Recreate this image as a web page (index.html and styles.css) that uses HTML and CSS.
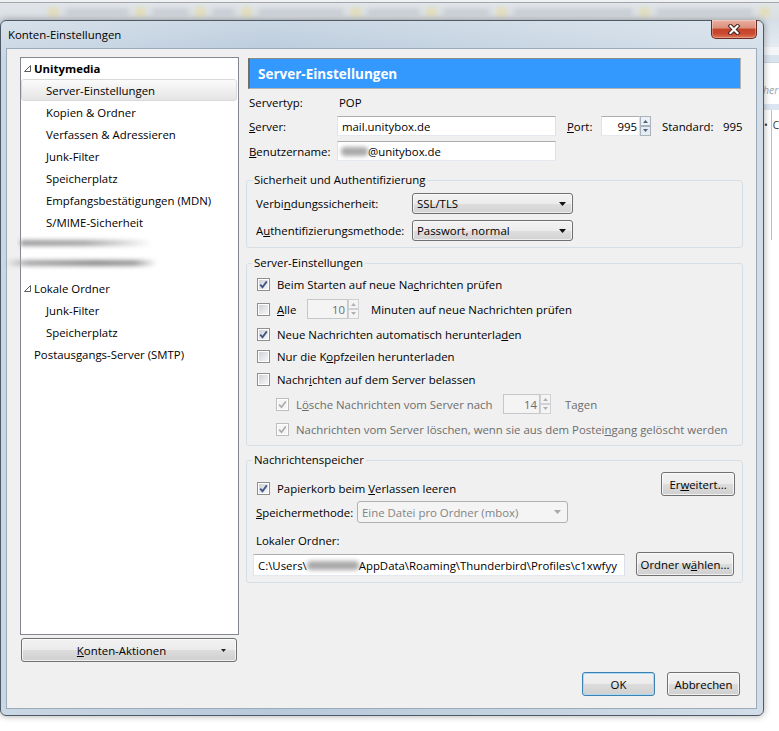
FILE: index.html
```html
<!DOCTYPE html>
<html lang="de">
<head>
<meta charset="utf-8">
<title>Konten-Einstellungen</title>
<link rel="stylesheet" href="styles.css">
</head>
<body>
<div class="desktop">
  <div class="bg-toolbar">
    <span class="ic"></span><span class="tx w64"></span>
    <span class="ic"></span><span class="tx w37"></span>
    <span class="ic"></span><span class="tx w23"></span>
    <span class="ic"></span><span class="tx w86"></span>
    <span class="ic"></span><span class="tx w53"></span>
    <span class="ic"></span><span class="tx w47"></span>
    <span class="ic"></span><span class="tx w120"></span>
    <span class="ic"></span><span class="tx w97"></span>
    <span class="ic"></span>
  </div>
  <div class="bg-app">
    <div class="app-top"></div>
    <div class="app-band"></div>
    <div class="app-line"></div>
    <div class="app-search">her</div>
    <div class="app-band2"></div>
    <div class="app-list">
      <div class="app-row"><span class="app-dot">&#8226;</span><span class="app-col">C</span></div>
    </div>
  </div>

  <div class="window">
    <div class="titlebar">
      <span class="title">Konten-Einstellungen</span>
      <div class="close">
        <svg width="14" height="11" viewBox="0 0 14 11"><path d="M3.5 2 L10.5 9 M10.5 2 L3.5 9" stroke="#3a1d16" stroke-width="4" stroke-linecap="square" fill="none"/><path d="M3.5 2 L10.5 9 M10.5 2 L3.5 9" stroke="#ffffff" stroke-width="2.2" stroke-linecap="square" fill="none"/></svg>
      </div>
    </div>

    <div class="client">
      <div class="main">
        <div class="left">
          <div class="tree">
            <div class="node top first"><svg class="twisty" viewBox="0 0 7 7"><polygon points="6.5,0.5 6.5,6.5 0.5,6.5" fill="#ffffff" stroke="#5c5c5c" stroke-width="1"/></svg><b>Unitymedia</b></div>
            <div class="node child selected">Server-Einstellungen</div>
            <div class="node child">Kopien &amp; Ordner</div>
            <div class="node child">Verfassen &amp; Adressieren</div>
            <div class="node child">Junk-Filter</div>
            <div class="node child">Speicherplatz</div>
            <div class="node child">Empfangsbestätigungen (MDN)</div>
            <div class="node child">S/MIME-Sicherheit</div>
            <div class="node redacted"><span class="smudge sm-a"></span></div>
            <div class="node redacted"><span class="smudge sm-b"></span></div>
            <div class="node top"><svg class="twisty" viewBox="0 0 7 7"><polygon points="6.5,0.5 6.5,6.5 0.5,6.5" fill="#ffffff" stroke="#5c5c5c" stroke-width="1"/></svg>Lokale Ordner</div>
            <div class="node child">Junk-Filter</div>
            <div class="node child">Speicherplatz</div>
            <div class="node root">Postausgangs-Server (SMTP)</div>
          </div>
          <button class="btn actions"><span class="btn-label"><u>K</u>onten-Aktionen</span><svg class="mini-arrow" viewBox="0 0 5 3"><polygon points="0,0 5,0 2.5,3" fill="#222"/></svg></button>
        </div>

        <div class="right">
          <div class="page-head">Server-Einstellungen</div>

          <div class="frow r-type">
            <span class="lab-main">Servertyp:</span>
            <span class="val-pop">POP</span>
          </div>
          <div class="frow r-server">
            <span class="lab-main"><u>S</u>erver:</span>
            <div class="tb w219">mail.unitybox.de</div>
            <span class="lab-port"><u>P</u>ort:</span>
            <div class="spinbox">
              <div class="tb port-tb">995</div>
              <svg class="spin" viewBox="0 0 11 20"><rect x="0.5" y="0.5" width="10" height="9" fill="#eef0f3" stroke="#a9b3be"/><rect x="0.5" y="10.5" width="10" height="9" fill="#e7eaee" stroke="#a9b3be"/><polygon points="3,7 5.5,4 8,7" fill="#4d6185"/><polygon points="3,13 5.5,16 8,13" fill="#4d6185"/></svg>
            </div>
            <span class="lab-std">Standard:</span>
            <span>995</span>
          </div>
          <div class="frow r-user">
            <span class="lab-main"><u>B</u>enutzername:</span>
            <div class="tb w219"><span class="smudge sm-user"></span>@unitybox.de</div>
          </div>

          <fieldset class="group g1">
            <legend>Sicherheit und Authentifizierung</legend>
            <div class="gbody">
              <div class="srow">
                <span class="lab-sec">Verbi<u>n</u>dungssicherheit:</span>
                <div class="combo"><span>SSL/TLS</span><svg class="arr" viewBox="0 0 7 4"><polygon points="0,0 7,0 3.5,4" fill="#111"/></svg></div>
              </div>
              <div class="srow">
                <span class="lab-sec">A<u>u</u>thentifizierungsmethode:</span>
                <div class="combo"><span>Passwort, normal</span><svg class="arr" viewBox="0 0 7 4"><polygon points="0,0 7,0 3.5,4" fill="#111"/></svg></div>
              </div>
            </div>
          </fieldset>

          <fieldset class="group g2">
            <legend>Server-Einstellungen</legend>
            <div class="gbody">
              <div class="crow h22">
                <span class="cb"><svg viewBox="0 0 11 11"><path d="M2.2 5.6 L4.5 8.2 L8.8 2.4" stroke="#3f5688" stroke-width="1.8" fill="none"/></svg></span>
                <span>Beim Starten auf neue Na<u>c</u>hrichten prüfen</span>
              </div>
              <div class="crow h28">
                <span class="cb"></span>
                <span class="lab-alle"><u>A</u>lle</span>
                <div class="spinbox">
                  <div class="tb dis alle-tb">10</div>
                  <svg class="spin" viewBox="0 0 11 20"><rect x="0.5" y="0.5" width="10" height="9" fill="#f4f4f4" stroke="#cfd1d4"/><rect x="0.5" y="10.5" width="10" height="9" fill="#f4f4f4" stroke="#cfd1d4"/><polygon points="3,7 5.5,4 8,7" fill="#b0b0b0"/><polygon points="3,13 5.5,16 8,13" fill="#b0b0b0"/></svg>
                </div>
                <span class="gap12">Minuten auf neue Nachrichten prüfen</span>
              </div>
              <div class="crow h22">
                <span class="cb"><svg viewBox="0 0 11 11"><path d="M2.2 5.6 L4.5 8.2 L8.8 2.4" stroke="#3f5688" stroke-width="1.8" fill="none"/></svg></span>
                <span>Neue Nachrichten automatisch herunterla<u>d</u>en</span>
              </div>
              <div class="crow h22">
                <span class="cb"></span>
                <span>Nur die K<u>o</u>pfzeilen herunterladen</span>
              </div>
              <div class="crow h24">
                <span class="cb"></span>
                <span>Nachr<u>i</u>chten auf dem Server belassen</span>
              </div>
              <div class="crow h26 ind dis-text">
                <span class="cb dis"><svg viewBox="0 0 11 11"><path d="M2.2 5.6 L4.5 8.2 L8.8 2.4" stroke="#a9a9a9" stroke-width="1.6" fill="none"/></svg></span>
                <span class="lab-loesche">L<u>ö</u>sche Nachrichten vom Server nach</span>
                <div class="spinbox">
                  <div class="tb dis loe-tb">14</div>
                  <svg class="spin" viewBox="0 0 11 20"><rect x="0.5" y="0.5" width="10" height="9" fill="#f4f4f4" stroke="#cfd1d4"/><rect x="0.5" y="10.5" width="10" height="9" fill="#f4f4f4" stroke="#cfd1d4"/><polygon points="3,7 5.5,4 8,7" fill="#b0b0b0"/><polygon points="3,13 5.5,16 8,13" fill="#b0b0b0"/></svg>
                </div>
                <span class="gap14">Tagen</span>
              </div>
              <div class="crow h24 ind dis-text">
                <span class="cb dis"><svg viewBox="0 0 11 11"><path d="M2.2 5.6 L4.5 8.2 L8.8 2.4" stroke="#a9a9a9" stroke-width="1.6" fill="none"/></svg></span>
                <span>Nachrichten vom Server löschen, wenn sie aus dem Postei<u>n</u>gang gelöscht werden</span>
              </div>
            </div>
          </fieldset>

          <fieldset class="group g3">
            <legend>Nachrichtenspeicher</legend>
            <div class="gbody">
              <div class="n-row1">
                <div class="cbl">
                  <span class="cb"><svg viewBox="0 0 11 11"><path d="M2.2 5.6 L4.5 8.2 L8.8 2.4" stroke="#3f5688" stroke-width="1.8" fill="none"/></svg></span>
                  <span>Papierkorb beim <u>V</u>erlassen leeren</span>
                </div>
                <button class="btn w74">Er<u>w</u>eitert...</button>
              </div>
              <div class="n-row2">
                <span class="lab-sm"><u>S</u>peichermethode:</span>
                <div class="combo dis"><span>Eine Datei pro Ordner (mbox)</span><svg class="arr" viewBox="0 0 7 4"><polygon points="0,0 7,0 3.5,4" fill="#a8a8a8"/></svg></div>
              </div>
              <div class="n-row3">Lokaler Ordner:</div>
              <div class="n-row4">
                <div class="tb path-tb">C:\Users\<span class="smudge sm-path"></span>AppData\Roaming\Thunderbird\Profiles\c1xwfyy</div>
                <button class="btn w98">Ordner w<u>ä</u>hlen...</button>
              </div>
            </div>
          </fieldset>
        </div>
      </div>

      <div class="footer">
        <button class="btn w73 default">OK</button>
        <button class="btn w73">Abbrechen</button>
      </div>
    </div>
  </div>
</div>
</body>
</html>
```

FILE: styles.css
```css
* { box-sizing: border-box; }
html, body { margin: 0; padding: 0; }
body {
  width: 779px;
  height: 731px;
  overflow: hidden;
  background: #ffffff;
  font-family: "Open Sans", "Noto Sans", sans-serif;
  font-size: 11.4px;
  color: #000;
}
u { text-decoration-thickness: 1px; text-underline-offset: 1px; }

.desktop { position: relative; width: 779px; height: 731px; background: #fff; }

/* background toolbar of the main window (blurred) */
.bg-toolbar {
  height: 20px;
  display: flex;
  align-items: center;
  gap: 6px;
  padding: 3px 0 0 48px;
  overflow: hidden;
  background: linear-gradient(#eef0f2 0, #eef0f2 2px, #a1a7ad 2px, #a1a7ad 3px, #e1e5e9 3px, #d9dee3 100%);
}
.ic { flex: none; width: 11px; height: 10px; background: #e4dcae; border-radius: 2px; filter: blur(2px); opacity: 0.7; }
.tx { flex: none; height: 6px; background: #c6cbd1; border-radius: 3px; filter: blur(2.5px); }
.w23 { width: 23px; } .w37 { width: 37px; } .w47 { width: 47px; } .w53 { width: 53px; }
.w64 { width: 64px; } .w86 { width: 86px; } .w97 { width: 97px; } .w120 { width: 120px; }

/* background application visible at the right edge */
.app-top { height: 27px; background: linear-gradient(#d6dee7, #e5ebf1); }
.app-band { height: 8px; background: #f3f5f8; }
.app-line { height: 8px; background: #dae4ee; border-bottom: 1px solid #c8d5e3; }
.app-search {
  height: 41px;
  padding: 19px 0 0 763px;
  line-height: 16px;
  font-style: italic;
  font-size: 10.5px;
  color: #9ca2a8;
  background: #fff;
  white-space: nowrap;
}
.app-band2 { height: 6px; background: #dce6f2; }
.app-list {
  height: 130px;
  background: linear-gradient(90deg, transparent 771px, #b7c1cc 771px, #b7c1cc 772px, transparent 772px);
}
.app-row { height: 30px; display: flex; align-items: center; padding-left: 764px; color: #333; white-space: nowrap; font-size: 10px; }
.app-dot { width: 9px; }

/* dialog window */
.window {
  position: absolute;
  left: 0;
  top: 20px;
  width: 764px;
  height: 696px;
  border: 1px solid #4e5966;
  border-radius: 6px;
  background:
    linear-gradient(rgba(255,255,255,0.25), rgba(255,255,255,0) 40px),
    linear-gradient(90deg, #cad7e4 0%, #b8c9da 35%, #c3d2e0 65%, #d2dde8 100%);
  box-shadow: 0 0 7px rgba(0,0,0,0.35);
  display: flex;
  flex-direction: column;
}
.titlebar {
  position: relative;
  flex: none;
  height: 27px;
  display: flex;
  align-items: center;
  padding-left: 7px;
}
.title { color: #000; }
.close {
  position: absolute;
  top: -1px;
  right: 6px;
  width: 46px;
  height: 19px;
  border: 1px solid #6a2a1e;
  border-top: none;
  border-radius: 0 0 5px 5px;
  background: linear-gradient(#eab0a2 0%, #dc8e7b 45%, #c4442b 50%, #c94a30 75%, #de7556 100%);
  box-shadow: inset 0 0 0 1px rgba(255,255,255,0.3);
  display: flex;
  align-items: center;
  justify-content: center;
}

.client {
  flex: 1;
  margin: 0 6px 6px 5px;
  border: 1px solid #9aabbc;
  background: #f0f0f0;
  padding: 8px 13px 12px;
  display: flex;
  flex-direction: column;
}
.main { flex: none; height: 605px; display: flex; gap: 7px; }

/* left tree */
.left { flex: none; width: 219px; display: flex; flex-direction: column; }
.tree {
  flex: none;
  height: 578px;
  border: 1px solid #828790;
  background: #fff;
}
.node { height: 22px; display: flex; align-items: center; white-space: nowrap; }
.node.first { margin-top: -1px; }
.node.top { padding-left: 3px; }
.node.root { padding-left: 13px; }
.node.child { padding-left: 25px; }
.node.selected {
  margin-right: 1px;
  padding-left: 24px;
  border: 1px solid #d9d9d9;
  border-radius: 3px;
  background: linear-gradient(#fbfbfb, #e5e5e5);
}
.twisty { flex: none; width: 7px; height: 7px; margin-right: 3px; }

.smudge { display: inline-block; flex: none; filter: blur(2px); border-radius: 4px; }
.sm-a { width: 132px; height: 6px; margin: -2px 0 0 -1px; background: linear-gradient(90deg, #9a9a9a, #a6a6a6 50%, rgba(190,190,190,0.6) 80%, rgba(220,220,220,0)); }
.sm-b { width: 152px; height: 6px; margin: -6px 0 0 -16px; background: linear-gradient(90deg, rgba(200,200,200,0), #a8a8a8 15%, #8c8c8c 60%, #9a9a9a 85%, rgba(200,200,200,0)); }
.sm-user { width: 27px; height: 9px; margin-left: -1px; background: #a9a9a9; }
.sm-path { width: 52px; height: 9px; background: #a9a9a9; }

/* buttons */
.btn {
  font: inherit;
  color: #000;
  height: 24px;
  padding: 0;
  border: 1px solid #707070;
  border-radius: 3px;
  background: linear-gradient(#f2f2f2 0%, #ebebeb 50%, #dddddd 50%, #cfcfcf 100%);
  box-shadow: inset 0 0 0 1px rgba(255,255,255,0.7);
  display: flex;
  align-items: center;
  justify-content: center;
  flex: none;
  white-space: nowrap;
}
.btn.default { border-color: #3c7fb1; box-shadow: inset 0 0 0 1px #a9dcf4; }
.actions { margin: 3px 0 0 1px; width: 216px; padding-right: 10px; }
.actions .btn-label { flex: 1; text-align: center; }
.mini-arrow { width: 5px; height: 3px; flex: none; }
.w73 { width: 73px; } .w74 { width: 74px; } .w98 { width: 98px; }

/* right pane */
.right { flex: none; width: 497px; display: flex; flex-direction: column; }
.page-head {
  flex: none;
  margin: 1px 2px 0;
  height: 31px;
  padding-left: 8px;
  background: #3399ff;
  color: #fff;
  font-weight: 700;
  font-size: 13.5px;
  display: flex;
  align-items: center;
  border-style: solid;
  border-width: 1px 1px 1px 2px;
  border-color: #8c8c8c #b4b4b4 #b4b4b4 #6e6e6e;
}
.frow { flex: none; display: flex; align-items: center; white-space: nowrap; }
.r-type { margin-top: 5px; height: 16px; }
.r-server { margin-top: 6px; height: 20px; }
.r-user { margin-top: 5px; height: 20px; }
.lab-main { flex: none; width: 91px; padding-left: 3px; }
.val-pop { padding-left: 2px; }
.lab-port { flex: none; margin-left: 11px; width: 34px; }
.lab-std { flex: none; margin-left: 11px; width: 61px; }

.tb {
  flex: none;
  height: 20px;
  padding: 0 4px;
  border: 1px solid;
  border-color: #abadb3 #dbdfe6 #e3e9ef #e2e3ea;
  background: #fff;
  display: flex;
  align-items: center;
  white-space: nowrap;
  overflow: hidden;
}
.tb.dis { border-color: #c5c7cb; background: #f4f4f4; color: #6d6d6d; }
.w219 { width: 219px; }
.spinbox { flex: none; display: flex; }
.spinbox .tb { justify-content: flex-end; padding: 0 2px 0 0; }
.port-tb { width: 39px; }
.alle-tb { width: 41px; }
.loe-tb { width: 37px; }
.spin { flex: none; display: block; width: 11px; height: 20px; }

/* group boxes */
.group {
  flex: none;
  margin: 0;
  padding: 0;
  min-width: 0;
  border: 1px solid #d5dfe5;
  border-radius: 3px;
}
.group legend { margin-left: 5px; padding: 0 2px; height: 16px; line-height: 16px; }
.g1 { margin-top: 11px; }
.g1 .gbody { padding: 5px 0 6px 9px; }
.g2 { margin-top: 7px; }
.g2 .gbody { padding: 2px 0 4px 10px; }
.g3 { margin-top: 6px; }
.g3 .gbody { padding: 4px 7px 6px 6px; }

.srow { display: flex; align-items: center; height: 21px; white-space: nowrap; }
.srow + .srow { margin-top: 6px; }
.lab-sec { flex: none; width: 156px; }
.combo {
  flex: none;
  width: 161px;
  height: 21px;
  padding: 0 6px 0 4px;
  border: 1px solid #707070;
  border-radius: 3px;
  background: linear-gradient(#f3f3f3 0%, #ececec 50%, #dedede 50%, #d2d2d2 100%);
  box-shadow: inset 0 0 0 1px rgba(255,255,255,0.6);
  display: flex;
  align-items: center;
  justify-content: space-between;
  white-space: nowrap;
}
.combo.dis { width: 211px; height: 22px; border-color: #adb2b5; background: #f4f4f4; box-shadow: none; color: #838383; }
.arr { flex: none; width: 7px; height: 4px; }

.crow { display: flex; align-items: center; white-space: nowrap; }
.h22 { height: 22px; } .h24 { height: 24px; } .h26 { height: 26px; } .h28 { height: 28px; }
.ind { padding-left: 19px; }
.dis-text { color: #6d6d6d; }
.cb {
  flex: none;
  width: 13px;
  height: 13px;
  margin-right: 7px;
  border: 1px solid #8e8f8f;
  background: linear-gradient(135deg, #cbced3 0%, #f4f4f4 85%);
  box-shadow: inset 0 0 0 1px #ffffff;
  display: flex;
}
.cb svg { width: 11px; height: 11px; display: block; }
.cb.dis { border-color: #bdbdbd; background: #f4f4f4; }
.lab-alle { flex: none; width: 30px; }
.lab-loesche { flex: none; width: 207px; }
.gap12 { margin-left: 12px; }
.gap14 { margin-left: 14px; }

.n-row1 { height: 24px; display: flex; align-items: flex-end; justify-content: space-between; }
.cbl { height: 16px; margin-left: 4px; display: flex; align-items: center; white-space: nowrap; }
.n-row2 { margin-top: 5px; height: 22px; display: flex; align-items: center; white-space: nowrap; }
.lab-sm { flex: none; margin-left: 3px; width: 101px; }
.n-row3 { margin-top: 9px; height: 16px; padding-left: 3px; display: flex; align-items: center; }
.n-row4 { margin-top: 4px; height: 24px; display: flex; align-items: flex-end; gap: 11px; }
.path-tb { width: 372px; height: 22px; }

.footer { flex: none; margin-top: 10px; height: 24px; display: flex; justify-content: flex-end; gap: 12px; padding-right: 3px; }
```
